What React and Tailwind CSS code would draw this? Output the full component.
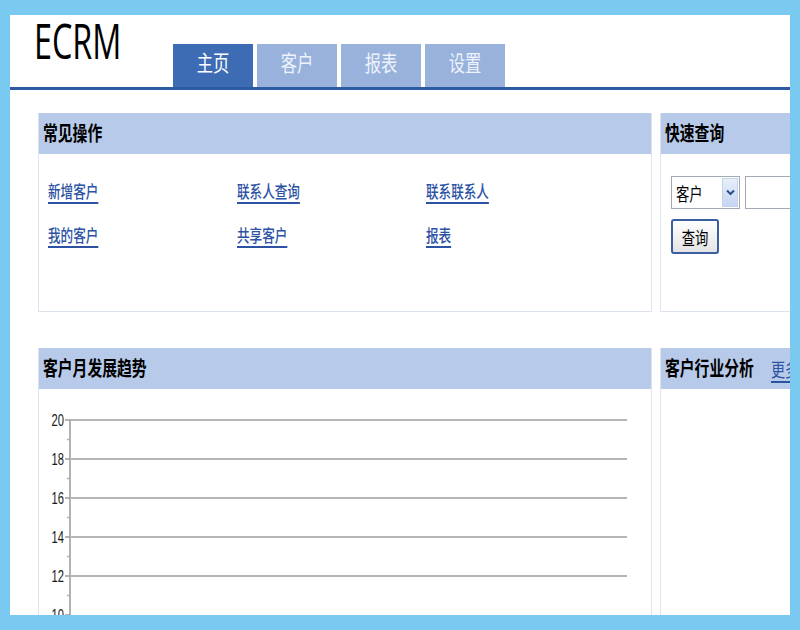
import React from "react";

const CJK = { fontFamily: '"Noto Sans CJK SC", "Noto Sans", sans-serif' };

function T({ children, className = "", origin = "origin-left" }) {
  return <span className={`inline-block ${origin} scale-x-[0.74] whitespace-nowrap ${className}`}>{children}</span>;
}

function PanelHeader({ children }) {
  return (
    <div className="h-[41px] bg-[#b8cae9] flex items-center pl-[4px] shrink-0">
      {children}
    </div>
  );
}

function Link({ children }) {
  return (
    <a className="text-[17px] leading-none text-[#2c52a4] cursor-pointer" style={CJK}>
      <T className="underline underline-offset-[4px] decoration-[1.5px] font-medium">{children}</T>
    </a>
  );
}

function Chart() {
  const ys = [31, 70, 109, 148, 187, 226];
  const labels = ["20", "18", "16", "14", "12", "10"];
  return (
    <svg width="612" height="240" className="block">
      <line x1="31" y1="31" x2="31" y2="240" stroke="#9a9a9a" strokeWidth="1.5" />
      {ys.map((y, i) => (
        <g key={y}>
          {i < 5 && <line x1="31" y1={y} x2="588" y2={y} stroke="#b5b5b5" strokeWidth="2" />}
          <line x1="26" y1={y} x2="31" y2={y} stroke="#9a9a9a" strokeWidth="1.5" />
          <line x1="28" y1={y + 19.5} x2="31" y2={y + 19.5} stroke="#b0b0b0" strokeWidth="1.5" />
          <text
            transform={`translate(25 ${y + 6}) scale(0.7 1)`}
            textAnchor="end"
            fontSize="16"
            fill="#1a1a1a"
            fontFamily='"Liberation Sans", Arial, sans-serif'
          >
            {labels[i]}
          </text>
        </g>
      ))}
    </svg>
  );
}

export default function App() {
  return (
    <div className="w-[800px] h-[630px] bg-[#79c9f0] pt-[15px] px-[10px] pb-[15px] box-border">
      <div className="h-full bg-white overflow-hidden flex flex-col">
        {/* Header */}
        <div className="h-[72px] flex shrink-0">
          <div className="w-[163px] pl-[24px]">
            <span
              className="inline-block origin-left scale-x-[0.66] text-[49px] leading-[50px] text-black"
              style={{ fontFamily: '"Open Sans", sans-serif' }}
            >
              ECRM
            </span>
          </div>
          <div className="self-end flex gap-[4px]">
            {["主页", "客户", "报表", "设置"].map((t, i) => (
              <div
                key={t}
                className={`w-[80px] h-[43px] flex items-center justify-center pb-[9px] ${
                  i === 0 ? "bg-[#3e6cb4] text-white" : "bg-[#98b2dc] text-[#eef3fb]"
                }`}
                style={CJK}
              >
                <T origin="origin-center" className="text-[22px] leading-none">{t}</T>
              </div>
            ))}
          </div>
        </div>
        <div className="h-[3px] bg-[#2d5aa0] shrink-0" />

        {/* Content */}
        <div className="pl-[28px] pt-[23px] flex flex-col">
          <div className="flex gap-[8px] h-[199px]">
            <div className="w-[614px] shrink-0 border border-[#dde4ef] border-t-0 flex flex-col">
              <PanelHeader>
                <T className="text-[20px] font-bold leading-none text-black">
                  <span style={CJK}>常见操作</span>
                </T>
              </PanelHeader>
              <div className="grid grid-cols-[189px_189px_189px] gap-y-[27px] pl-[9px] pt-[28px]">
                <Link>新增客户</Link>
                <Link>联系人查询</Link>
                <Link>联系联系人</Link>
                <Link>我的客户</Link>
                <Link>共享客户</Link>
                <Link>报表</Link>
              </div>
            </div>
            <div className="w-[200px] shrink-0 border border-[#dde4ef] border-t-0 flex flex-col">
              <PanelHeader>
                <T className="text-[20px] font-bold leading-none text-black">
                  <span style={CJK}>快速查询</span>
                </T>
              </PanelHeader>
              <div className="pl-[10px] pt-[22px] flex flex-col items-start">
                <div className="flex gap-[5px]">
                  <div className="w-[69px] h-[33px] border border-[#a3aab3] flex items-center justify-between pl-[4px] pr-[1px]" style={CJK}>
                    <T className="text-[18px] leading-none text-black">客户</T>
                    <div className="w-[16px] h-[29px] border border-[#c3d3ea] bg-gradient-to-b from-[#e8eff9] to-[#c4d6f2] flex items-center justify-center">
                      <svg width="9" height="7" viewBox="0 0 9 7">
                        <path d="M1 1.5 L4.5 5 L8 1.5" fill="none" stroke="#2c4f8c" strokeWidth="2" />
                      </svg>
                    </div>
                  </div>
                  <div className="w-[110px] h-[33px] border border-[#a3aab3]" />
                </div>
                <button className="mt-[10px] w-[48px] h-[35px] border-2 border-[#3b5e9e] rounded-[3px] bg-gradient-to-b from-white to-[#e4e4e4] flex items-center justify-center" style={CJK}>
                  <T origin="origin-center" className="text-[18px] leading-none text-black">查询</T>
                </button>
              </div>
            </div>
          </div>

          <div className="flex gap-[8px] mt-[36px] h-[300px]">
            <div className="w-[614px] shrink-0 border border-[#dde4ef] border-t-0 flex flex-col">
              <PanelHeader>
                <T className="text-[20px] font-bold leading-none text-black">
                  <span style={CJK}>客户月发展趋势</span>
                </T>
              </PanelHeader>
              <Chart />
            </div>
            <div className="w-[200px] shrink-0 border border-[#dde4ef] border-t-0 flex flex-col">
              <PanelHeader>
                <T className="text-[20px] font-bold leading-none text-black">
                  <span style={CJK}>客户行业分析</span>
                </T>
                <a className="-ml-[14px] text-[19px] leading-none text-[#2c52a4] cursor-pointer" style={CJK}>
                  <T className="underline underline-offset-[4px] decoration-[1.5px]">更多</T>
                </a>
              </PanelHeader>
            </div>
          </div>
        </div>
      </div>
    </div>
  );
}
